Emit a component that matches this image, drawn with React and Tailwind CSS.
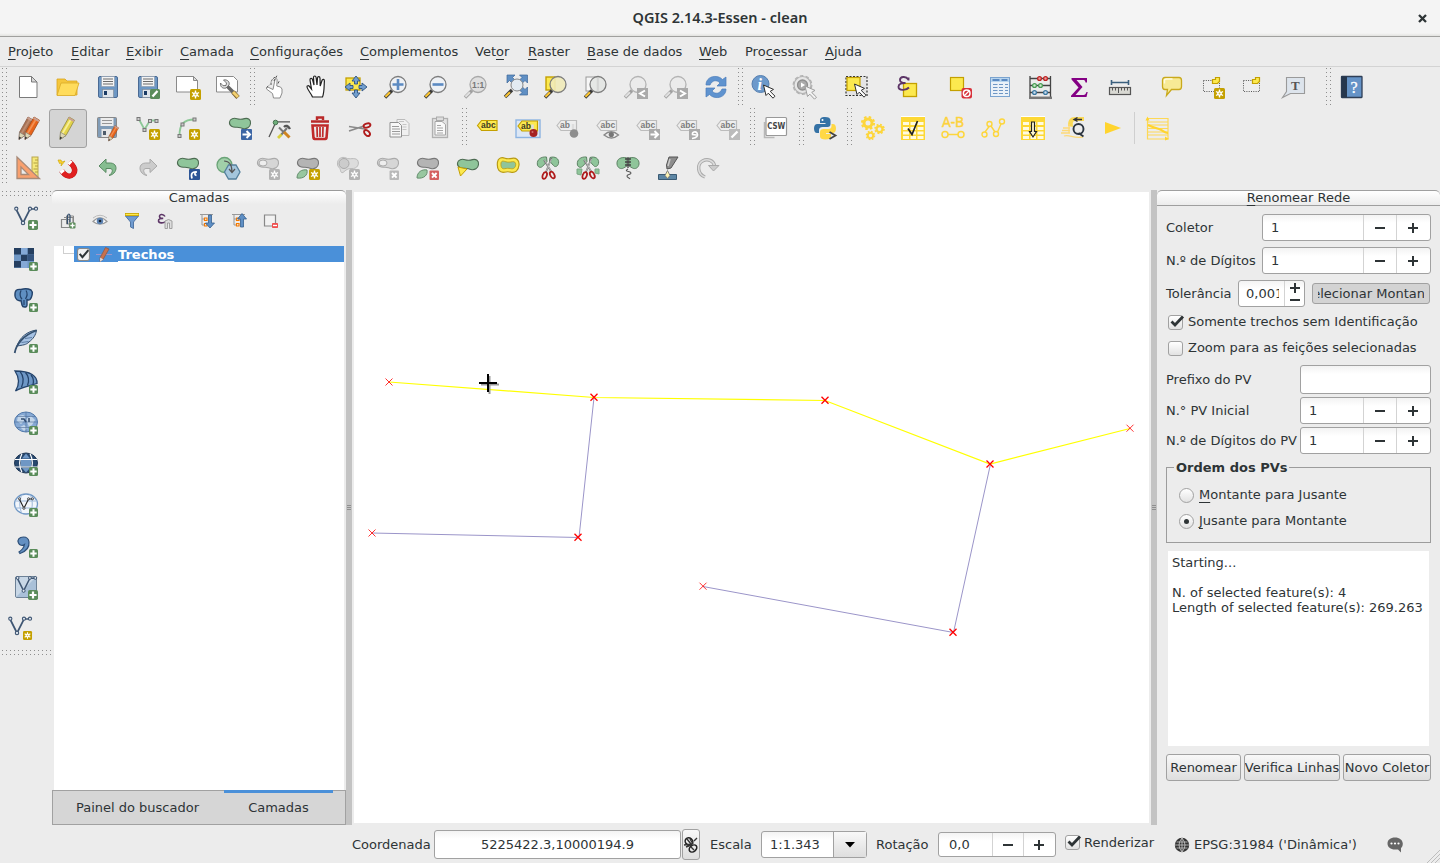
import React from "react";

/* ---------- shared drawing helpers ---------- */

function Ic({ children }) {
  return (
    <svg viewBox="0 0 24 24" width="24" height="24" className="block shrink-0 overflow-visible" fill="none">
      {children}
    </svg>
  );
}

function Star({ x = 13, y = 13, gray = false }) {
  return (
    <g transform={`translate(${x} ${y})`}>
      <rect x="0" y="0" width="11" height="11" rx="1.5" fill={gray ? "#b3b3b3" : "#c4a000"} />
      <path d="M5.5 1.5v8M2 3.5l7 4M9 3.5l-7 4" stroke="#fff" strokeWidth="1.4" />
      <circle cx="5.5" cy="5.5" r="2.3" fill="#fff" />
      <circle cx="5.5" cy="5.5" r="1" fill={gray ? "#b3b3b3" : "#d9bc30"} />
    </g>
  );
}

function Plus({ x = 15, y = 15, s = 9 }) {
  return (
    <g transform={`translate(${x} ${y}) scale(${s / 9})`}>
      <rect width="9" height="9" rx="1.5" fill="#5a8c5a" />
      <path d="M4.5 1.3v6.4M1.3 4.5h6.4" stroke="#fff" strokeWidth="2" />
    </g>
  );
}

function Cross({ gray = false }) {
  return (
    <g>
      <rect x="13.5" y="14.5" width="9.5" height="9.5" rx="1" fill={gray ? "#b9b9b9" : "#d45f5f"} />
      <path d="M16 17l4.6 4.6M20.6 17L16 21.600" stroke="#fff" strokeWidth="2" />
    </g>
  );
}

function Lens({ fill = "#eef2f6", stroke = "#7c7c7c", handle = "#fcc735", dim = false, children }) {
  return (
    <>
      <path d="M8 15.500L1 22.500" stroke={dim ? "#a0a0a0" : "#3a3a3a"} strokeWidth="3.400" />
      <path d="M6 17.200L1.400 21.800" stroke={dim ? "#e0e0e0" : handle} strokeWidth="2" />
      <circle cx="14" cy="9.500" r="8" fill={fill} fillOpacity="0.9" stroke={stroke} strokeWidth="1.300" />
      {children}
    </>
  );
}

function Blob({ fill = "#8fc59a", stroke = "#4d6b52" }) {
  return (
    <path
      d="M1.500 5C2 1.500 6 .8 9 1.700c3 .9 5 .6 7.500-.1C20 .7 23 2.600 22.500 6.500c-.4 4-4 5.800-7.500 5-3-.7-4-1.500-6.500-1.300C5 10.500 1 9 1.500 5z"
      fill={fill}
      stroke={stroke}
      strokeWidth="1.100"
    />
  );
}

function Floppy() {
  return (
    <>
      <rect x="2.500" y="1.500" width="19" height="21" rx="1.500" fill="#6d97c4" stroke="#4a6a94" />
      <rect x="5.500" y="1.500" width="13" height="10" fill="#f4f4f4" stroke="#8a98a8" strokeWidth=".6" />
      <path d="M7 4h10M7 6.500h10M7 9h10" stroke="#6b6b6b" strokeWidth="1" />
      <rect x="6.500" y="14.500" width="11" height="8" fill="#dfe4ea" stroke="#7d8894" strokeWidth=".6" />
      <rect x="8" y="16" width="3" height="4" fill="#1c3c66" />
    </>
  );
}

function Pencil({ body = "#e8641b", edge = "#9c4a1c", light = "#f29052" }) {
  return (
    <>
      <path d="M13 1l5.500 3.200L10 19.500l-6 4 .5-7.300z" fill={body} stroke={edge} strokeWidth=".8" />
      <path d="M14.500 4L6.500 17.500" stroke={light} strokeWidth="1.800" />
      <path d="M4.500 16.200l5.500 3.300-6 4z" fill="#ddd6b4" stroke="#777" strokeWidth=".6" />
      <path d="M4.200 20.500l2 1.300L3.800 23.500z" fill="#333" />
      <path d="M13 1l5.500 3.200-1 1.800L12 2.800z" fill="#c9a091" />
    </>
  );
}

function Label({ fill = "#fce94f", stroke = "#c4a000", color = "#40391f", text = "abc" }) {
  return (
    <>
      <path d="M2 9.500L6 4.500h15.500v10H6z" fill={fill} stroke={stroke} strokeWidth="1.200" />
      <text x={text === "ab" ? 5 : 5.500} y="12.400" fontFamily="Liberation Sans, sans-serif" fontWeight="bold" fontSize="8.500" fill={color}>
        {text}
      </text>
    </>
  );
}

function GrayLabel({ text }) {
  return <Label fill="#eeeeee" stroke="#bcbcbc" color="#7b7b7b" text={text} />;
}

function VLine({ x = 0, y = 0, color = "#3f5673", dot = "#dfe6ee" }) {
  return (
    <g transform={`translate(${x} ${y})`} stroke={color}>
      <path d="M2 3l7 14L16 3h6" strokeWidth="1.700" />
      <circle cx="2.300" cy="2.700" r="1.600" fill={dot} strokeWidth="1.100" />
      <circle cx="9" cy="17" r="1.700" fill={dot} strokeWidth="1.100" />
      <circle cx="16" cy="2.700" r="1.600" fill={dot} strokeWidth="1.100" />
      <circle cx="22" cy="2.700" r="1.600" fill={dot} strokeWidth="1.100" />
    </g>
  );
}

function Gear({ cx, cy, r, color }) {
  return (
    <g>
      <circle cx={cx} cy={cy} r={r} stroke={color} strokeWidth={r * 0.75} />
      <circle cx={cx} cy={cy} r={r * 1.5} stroke={color} strokeWidth={r * 0.55} strokeDasharray={`${r * 0.62} ${r * 0.558}`} />
    </g>
  );
}

function Pointer({ x = 0, y = 0, dim = false }) {
  return (
    <path
      transform={`translate(${x} ${y})`}
      d="M0 0l2.500 10.500 2.300-2.300 4.700 5 2-2-4.800-4.800 3.300-2z"
      fill={dim ? "#f2f2f2" : "#fff"}
      stroke={dim ? "#9d9d9d" : "#2e2e2e"}
      strokeWidth="1"
    />
  );
}

function Grid({ children }) {
  return (
    <>
      <rect x="0" y="0" width="24" height="1" fill="#fff" />
      <rect x="0" y="1" width="24" height="23" fill="#fdd835" />
      <path d="M2 7.500h6M9.500 7.500h5.500M16.500 7.500h6M2 12.500h6M9.500 12.500h5.500M16.500 12.500h6M2 17h6M9.500 17h5.500M16.500 17h6M2 21.500h6M9.500 21.500h5.500M16.500 21.500h6" stroke="#fffbe0" strokeWidth="2.800" />
      {children}
    </>
  );
}

function Scissors({ extra = false }) {
  return (
    <>
      <path d="M10.500 1C5 .5 1 3.500 1.300 8c.2 3 3 4.300 5 2.600L11 5.500zM14 1.500C19 0 23.500 2.500 22.500 7.500c-.7 3-3.500 4-5 2L13.500 5z" fill="#8fc59a" stroke="#5d8264" />
      {extra && <path d="M1 13h5l-1 6-4-1zM19 13h4v5l-4-1z" fill="#8fc59a" stroke="#7ba684" />}
      <path d="M8 4l7.500 12M15.500 2L10 16" stroke="#777" strokeWidth="1.700" />
      <path d="M8.500 4l7 12M15.500 3L10.300 15" stroke="#ddd" strokeWidth=".6" />
      <ellipse cx="8.700" cy="19.500" rx="2" ry="3.500" transform="rotate(22 8.700 19.500)" stroke="#b01c1c" strokeWidth="1.800" />
      <ellipse cx="16.300" cy="19" rx="2" ry="3.500" transform="rotate(-28 16.300 19)" stroke="#b01c1c" strokeWidth="1.800" />
    </>
  );
}

/* ---------- toolbar icon drawings ---------- */

const icons = {
  newFile: <Ic><path d="M3.500 1.500h12L21 7v15.500H3.500z" fill="#fff" stroke="#7a7a7a" /><path d="M15.500 1.500V7H21z" fill="#d8d8d8" stroke="#7a7a7a" /></Ic>,
  open: <Ic><path d="M1 4h8l2 2h10v14H1z" fill="#f5c63c" stroke="#d9a520" strokeWidth=".8" /><path d="M1 20.500L5 8h18l-4 12.500z" fill="#ffdc5c" stroke="#d9ab28" strokeWidth=".8" /></Ic>,
  save: <Ic><Floppy /></Ic>,
  saveAs: <Ic><Floppy /><rect x="14" y="14" width="10" height="10" rx="1.500" fill="#5a8c5a" /><path d="M16.500 21.500l5-5.500" stroke="#fff" strokeWidth="2.300" /></Ic>,
  newComposer: <Ic><path d="M.5 1.500h17L21.500 5.500v11.500H.5z" fill="#fff" stroke="#8a8a8a" /><path d="M17.500 1.500v4h4z" fill="#ddd" stroke="#8a8a8a" /><Star x={14} y={14} /></Ic>,
  composer: <Ic><path d="M.5 1.500h17L21.500 5.500v11.500H.5z" fill="#fff" stroke="#8a8a8a" /><path d="M11.500 11.500l6 6" stroke="#666" strokeWidth="3.500" /><path d="M7.500 5l3 3-.5 2.500-3 .2L4.500 8c-.5 3.500 2 6 5.500 5l3-3c1-3-1.500-5.800-5.500-5z" fill="#ddd" stroke="#666" strokeWidth=".9" /><path d="M17 17l5 5.500" stroke="#7a5c28" strokeWidth="4.500" /><path d="M17 17l5 5" stroke="#f2d070" strokeWidth="3" /></Ic>,
  touch: <Ic><g transform="translate(1.500 0)"><path d="M8 23l-1-4.500L1 14c-.3-1.600 1-2 2.200-1.500l4.300 2L9.500 4.500c.4-1.600 2.200-1.200 2.100.3L11.300 11l3.700 1 1.500 2v4L14.500 23z" fill="#fff" stroke="#8c8c8c" /><path d="M5.500 10c-.5-4 1.500-7 5.500-8.500M1 12.500l3-2.500M8.500 6l3-5.500M12.500 8.500l1.500-3" stroke="#555" strokeWidth="1" strokeDasharray="2.500 1" /></g></Ic>,
  hand: <Ic><path transform="translate(1.500 0)" d="M7 22c-1-3-5-7-5.500-10C1.300 10.500 3 10.300 4 11.500l2 2.500L4.500 5c-.2-2 2-2.300 2.500-.5L8.500 10 8 2.500c0-2 2.300-2 2.600 0L11.500 10l.5-7c.2-1.900 2.400-1.700 2.500.2L14.700 11l1.800-5.500c.6-1.800 2.600-1.300 2.400.6C18.500 10 19 17 17 22z" fill="#fff" stroke="#222" strokeWidth="1.200" /></Ic>,
  panSel: <Ic><rect x="2" y="3" width="14" height="12" fill="#fce94f" stroke="#c4a000" strokeWidth="1.300" /><path d="M12 1l4 5h-2.500v3h-3V6H8zM12 23l4-5h-2.500v-3h-3v3H8zM1 12l5-4v2.500h3v3H6V16zM23 12l-5-4v2.500h-3v3h3V16z" fill="#729fcf" stroke="#2f5480" strokeWidth=".9" /></Ic>,
  zoomIn: <Ic><Lens><path d="M14 4v11M8.500 9.500h11" stroke="#5b8ac2" strokeWidth="2.600" /></Lens></Ic>,
  zoomOut: <Ic><Lens><path d="M8.500 9.500h11" stroke="#5b8ac2" strokeWidth="2.600" /></Lens></Ic>,
  zoomNative: <Ic><Lens fill="#dedede" stroke="#a8a8a8" dim><text x="8" y="12.500" fontFamily="Liberation Sans, sans-serif" fontWeight="bold" fontSize="8.500" fill="#777">1:1</text></Lens></Ic>,
  zoomFull: <Ic><path d="M3 0h8L8.500 2.500l3 3-3 3-3-3L3 8zM23.500 0v8L21 5.500l-3 3-3-3 3-3L15.500 0zM23.500 20h-8l2.500-2.500-3-3 3-3 3 3 2.500-2.500z" fill="#5f8fc4" stroke="#3f6799" strokeWidth=".7" /><path d="M8 15L1 22" stroke="#3a3a3a" strokeWidth="3.400" /><path d="M6 17.200L1.400 21.800" stroke="#fcc735" strokeWidth="2" /><circle cx="13" cy="10" r="6" fill="#e3ebf2" stroke="#888" /></Ic>,
  zoomSel: <Ic><rect x="2" y="2" width="9" height="13" fill="#fce94f" stroke="#c4a000" strokeWidth="1.400" /><Lens fill="#f1ebb9" /></Ic>,
  zoomLayer: <Ic><rect x="2" y="2" width="11" height="14" fill="#f7f7f7" stroke="#999" /><Lens fill="#e3e5e3"><path d="M14 3v13" stroke="#c8c8c8" /></Lens></Ic>,
  zoomLast: <Ic><Lens fill="#ebebeb" stroke="#b3b3b3" dim /><rect x="13" y="13" width="11" height="11" fill="#aaa" /><path d="M21 15.500l-5 3 5 3" stroke="#fff" strokeWidth="2" /></Ic>,
  zoomNext: <Ic><Lens fill="#ebebeb" stroke="#b3b3b3" dim /><rect x="13" y="13" width="11" height="11" fill="#aaa" /><path d="M16 15.500l5 3-5 3" stroke="#fff" strokeWidth="2" /></Ic>,
  refresh: <Ic><path d="M2 10C2 4 7 1 12 1.500c3 .2 5 1.500 6.500 3L22 2v9h-9l3-3C13 4.500 8 5 6 10z" fill="#5f93cf" stroke="#4a7cba" strokeWidth=".7" /><path d="M22 14c0 6-5 9-10 8.500-3-.2-5-1.500-6.500-3L2 22v-9h9l-3 3c3 3.500 8 3 10-2z" fill="#5f93cf" stroke="#4a7cba" strokeWidth=".7" /></Ic>,
  identify: <Ic><circle cx="8.500" cy="9" r="8.500" fill="#6c99cb" stroke="#557fb0" /><text x="5.500" y="15" fontFamily="Liberation Serif, serif" fontStyle="italic" fontWeight="bold" fontSize="16" fill="#fff">i</text><Pointer x={11.500} y={10} /></Ic>,
  action: <Ic><circle cx="10.500" cy="10" r="8.500" fill="#e6e6e6" stroke="#b2b2b2" strokeWidth="1.200" /><circle cx="10.500" cy="10" r="9.300" stroke="#b2b2b2" strokeWidth="1.300" strokeDasharray="3.500 2.340" /><circle cx="10.500" cy="10" r="5" fill="#aaa" stroke="#8e8e8e" strokeWidth="1.300" /><path d="M9 7.500l4 2.500-4 2.500z" fill="#fff" /><Pointer x={13} y={11} dim /></Ic>,
  select: <Ic><rect x="1" y="1.500" width="21" height="19" fill="#e4e4e4" stroke="#333" strokeWidth="1.200" strokeDasharray="2 1.500" /><rect x="2" y="2.500" width="13" height="13" fill="#fce94f" stroke="#c4a000" strokeWidth="1.200" /><Pointer x={9.500} y={9} /></Ic>,
  expression: <Ic><rect x="8.500" y="8.500" width="13" height="13" fill="#fce94f" stroke="#c4a000" strokeWidth="1.300" /><path d="M13.500 5.500V2.500M13.300 4.500C11 .8 5 1.500 5 5c0 2.200 2.500 3.200 5.500 3C6.500 7.800 3.500 9 3.500 11.800c0 4 7.500 4 10.500.7" stroke="#5c3566" strokeWidth="1.900" /></Ic>,
  deselect: <Ic><rect x="2.500" y="2.500" width="13" height="13" fill="#fce94f" stroke="#c4a000" strokeWidth="1.200" /><rect x="13.500" y="13" width="10.500" height="10.500" rx="2" fill="#d8313a" /><circle cx="18.700" cy="18.200" r="3.300" stroke="#fff" strokeWidth="1.500" /><path d="M16 21l5.500-5.500" stroke="#fff" strokeWidth="1.300" /></Ic>,
  table: <Ic><rect x="2.500" y="2.500" width="19" height="19" fill="#eaf1f8" stroke="#7aa3cf" /><rect x="3" y="3" width="18" height="4" fill="#b8d5ee" /><path d="M4.500 5h7M13.500 5h6" stroke="#5b8ac2" strokeWidth="2" /><path d="M5 9.500h4.500M11 9.500h4M17 9.500h3M5 12.500h4.500M11 12.500h4M17 12.500h3M5 15.500h4.500M11 15.500h4M17 15.500h3M5 18.500h4.500M11 18.500h4M17 18.500h3" stroke="#6e96c4" /></Ic>,
  abacus: <Ic><path d="M2 1v22M22.500 1v22M2 3.500h20M2 10.500h20M2 17.500h20" stroke="#444" strokeWidth="1.300" /><path d="M1 22.800h23" stroke="#777" strokeWidth="2.500" /><g strokeWidth="1.300"><circle cx="11.500" cy="3.500" r="1.900" fill="#e99" stroke="#b22" /><circle cx="17.500" cy="3.500" r="1.900" fill="#e99" stroke="#b22" /><circle cx="6.500" cy="10.500" r="1.900" fill="#cec" stroke="#4a9a55" /><circle cx="12.500" cy="10.500" r="1.900" fill="#cec" stroke="#4a9a55" /><circle cx="6.500" cy="17.500" r="1.900" fill="#cde" stroke="#3c78a0" /><circle cx="17.500" cy="17.500" r="1.900" fill="#cde" stroke="#3c78a0" /></g></Ic>,
  sigma: <Ic><path d="M3.500 3h15.500v4.500h-1.500c-.3-2-1-2.500-2.500-2.500H8.500l6 7-7 8h8c1.500 0 2.300-1 3-3h1.200L18.500 22H3v-1.300L10.500 12.500 3.500 4.500z" fill="#840084" /></Ic>,
  ruler: <Ic><path d="M3.500 7.500h17M3.500 5v5M20.500 5v5" stroke="#3a5f7d" strokeWidth="1.600" /><rect x="1.500" y="12.500" width="21" height="7" fill="#d9d9d3" stroke="#555" strokeWidth="1.200" /><path d="M4.500 13v2.500M7.500 13v2.500M10.500 13v5M13.500 13v2.500M16.500 13v2.500M19.500 13v2.500" stroke="#555" /></Ic>,
  bubble: <Ic><path d="M5 2.500h14q2.500 0 2.500 3v6q0 3-2.500 3h-7.500L6.500 20.500l1-6H5q-2.500 0-2.500-3v-6q0-3 2.500-3z" fill="#f7ea95" stroke="#c9a91c" strokeWidth="1.300" /><path d="M4.500 8.500v-3q0-1.500 2-1.500h6" stroke="#fffbe0" strokeWidth="1.400" /></Ic>,
  newNote: <Ic><rect x="1.500" y="5.500" width="16" height="11" fill="#eee" stroke="#555" strokeDasharray="1 1.300" /><path d="M10.500 4.500h3v-2h4v4l-2 2h-5z" fill="#fce94f" stroke="#c4a000" strokeWidth="1.200" /><Star x={12} y={13} /></Ic>,
  note: <Ic><rect x="1.500" y="5.500" width="16" height="11" fill="#eee" stroke="#555" strokeDasharray="1 1.300" /><path d="M10.500 4.500h3v-2h4v4l-2 2h-5z" fill="#fce94f" stroke="#c4a000" strokeWidth="1.200" /></Ic>,
  textNote: <Ic><path d="M4.500 2.500h18v16H8.500L.5 22.500l4-6z" fill="#dde4ec" stroke="#9a9a9a" strokeWidth="1.100" /><text x="9" y="15" fontFamily="Liberation Serif, serif" fontWeight="bold" fontSize="13" fill="#555">T</text></Ic>,
  help: <Ic><rect x="1.500" y="1.500" width="20.500" height="21" rx=".5" fill="#6593c7" stroke="#2e3e56" strokeWidth="1.300" /><rect x="1.500" y="1.500" width="5.500" height="21" fill="#26374d" /><text x="10.500" y="17.500" fontFamily="Liberation Serif, serif" fontSize="16" fill="#fff" stroke="#fff" strokeWidth=".3">?</text></Ic>,

  pencils: <Ic><g transform="translate(-1 0)"><Pencil body="#a87355" edge="#8a5a44" light="#bd8b70" /></g><g transform="translate(5 0)"><Pencil /></g></Ic>,
  pencil: <Ic><Pencil body="#e2d34a" edge="#8d8545" light="#f7ef98" /></Ic>,
  saveEdits: <Ic><g opacity=".85"><rect x="1.500" y="1.500" width="19" height="20" rx="1" fill="#6f8fae" stroke="#777" /><rect x="4.500" y="2" width="13" height="8" fill="#ececec" /><path d="M6 4.500h10M6 7.500h10" stroke="#888" /><rect x="5.500" y="13" width="10" height="8" fill="#e6e6e6" /><rect x="7" y="15" width="3" height="4" fill="#345" /></g><g transform="translate(10 9) scale(.68)"><Pencil /></g></Ic>,
  addLine: <Ic><path d="M2.500 2.500l6 11 5.500-9h6.500" stroke="#8cc897" strokeWidth="1.800" /><g fill="#ccc" stroke="#777"><rect x="1" y="1.500" width="3" height="3" /><rect x="7" y="12.500" width="3" height="3" /><rect x="12.500" y="3.500" width="3" height="3" /><rect x="19" y="3.500" width="3" height="3" /></g><Star x={13} y={13} /></Ic>,
  addCurve: <Ic><path d="M3.500 19.500C3.500 8 8 3.500 18.500 3.500" stroke="#8cc897" strokeWidth="1.900" /><g fill="#ccc" stroke="#777"><rect x="2" y="18.500" width="3" height="3" /><rect x="5" y="7" width="3" height="3" /><rect x="17" y="2" width="3" height="3" /></g><Star x={13} y={13} /></Ic>,
  moveFeature: <Ic><g transform="translate(0 1)"><Blob /></g><rect x="13" y="13" width="11" height="11" rx="1" fill="#3c66a5" /><path d="M14.500 18.500h6M18.500 15l3.500 3.500-3.500 3.500" stroke="#fff" strokeWidth="2" /></Ic>,
  node: <Ic><path d="M7.500 7L1 21M9 5.800h13" stroke="#555" strokeWidth="1.300" /><circle cx="7.500" cy="6.500" r="2.300" fill="#6dae7a" stroke="#4a7352" /><path d="M11 11.500l6 6M19 12l-6 7" stroke="#777" strokeWidth="2" /><path d="M16 11q3-3 6 2" stroke="#555" strokeWidth="2.400" /><path d="M16 16l5.500 5.500" stroke="#cf8420" strokeWidth="3" /><path d="M13.500 18.500l-3.500 3.500" stroke="#d9cf3d" strokeWidth="2.800" /></Ic>,
  trash: <Ic><path d="M3 5.500h18M9 4V1.500h6V4" stroke="#b92929" strokeWidth="2.400" /><path d="M4.500 9.500h15l-1 12.500q-.2 1-1 1h-11q-.8 0-1-1z" fill="#ececec" stroke="#c02a2a" strokeWidth="2.600" /><path d="M9 11l.3 10M12 11v10M15 11l-.3 10" stroke="#c02a2a" strokeWidth="1.700" /></Ic>,
  cut: <Ic><path d="M1 10.500l16 2.500M1 15l15-5" stroke="#8a8a8a" strokeWidth="1.700" /><ellipse cx="19" cy="9.500" rx="3.500" ry="2" transform="rotate(-18 19 9.500)" stroke="#b01c1c" strokeWidth="1.900" /><ellipse cx="19" cy="17" rx="3.500" ry="2.200" transform="rotate(45 19 17)" stroke="#b01c1c" strokeWidth="1.900" /></Ic>,
  copy: <Ic><g transform="translate(-1.500 0)"><path d="M10.500 3.500h8l4 4v12h-12z" fill="#f0f0f0" stroke="#bbb" /><path d="M3.500 6.500h8.500l3 3v11.500H3.500z" fill="#f7f7f7" stroke="#8f8f8f" /><path d="M5.500 10.500h7M5.500 13h8M5.500 15.500h8M5.500 18h8" stroke="#9a9a9a" /><path d="M12.500 5.500h5M16 8.500h4M16 11h4M16 13.500h4" stroke="#c5c5c5" /></g></Ic>,
  paste: <Ic><rect x="4.500" y="2.500" width="15" height="19" fill="#e3e3e3" stroke="#b0b0b0" strokeWidth="1.300" /><path d="M7 5.500h7l3.500 3V19H7z" fill="#f9f9f9" stroke="#a5a5a5" /><rect x="8.500" y="1" width="7" height="3.500" fill="#ddd" stroke="#aaa" /><path d="M9 9.500h4M9 12h6M9 14.500h6M9 17h6" stroke="#a5a5a5" /></Ic>,
  label: <Ic><g transform="translate(-.5 0)"><Label /></g></Ic>,
  labelPin: <Ic><rect x="0" y="4" width="24" height="17.500" fill="#dce7f5" stroke="#8db4e2" strokeWidth="1.400" /><g transform="translate(0 .5)"><Label text="ab" /><path d="M16.500 8v8" stroke="#ddd" strokeWidth="2.500" /><circle cx="17.500" cy="16.500" r="4" fill="#a52222" /><circle cx="16.500" cy="15.500" r="1" fill="#d07070" /></g></Ic>,
  labelPinOff: <Ic><g transform="translate(-1 0)"><GrayLabel text="ab" /></g><path d="M17 8v8" stroke="#ddd" strokeWidth="2.500" /><circle cx="18" cy="17.500" r="4.300" fill="#8e8e8e" /></Ic>,
  labelShow: <Ic><g transform="translate(-1 0)"><GrayLabel /></g><path d="M8 19q7-6.500 14.500 0-7 6-14.500 0z" fill="#eee" stroke="#888" strokeWidth="1.300" /><circle cx="15.300" cy="18.500" r="2.600" fill="#777" /></Ic>,
  labelMove: <Ic><g transform="translate(-1 0)"><GrayLabel /></g><rect x="13" y="13" width="11" height="11" fill="#aaa" /><path d="M14.500 18.500h6M18.500 15l3.500 3.500-3.500 3.500" stroke="#fff" strokeWidth="2" /></Ic>,
  labelRotate: <Ic><g transform="translate(-1 0)"><GrayLabel /></g><rect x="13" y="13" width="11" height="11" fill="#aaa" /><path d="M16 22.500c5-.5 6.500-3 5-5.500-1.500-2-5-1-4.500 1.500l4 .5" stroke="#fff" strokeWidth="1.600" /></Ic>,
  labelEdit: <Ic><g transform="translate(-1 0)"><GrayLabel /></g><rect x="13" y="13" width="11" height="11" fill="#bbb" /><path d="M15.500 21.500l6-6" stroke="#fff" strokeWidth="2.300" /></Ic>,
  csw: <Ic><path d="M.5 6v15.500h10" stroke="#b8b8b8" strokeWidth="1.500" /><rect x="2" y="1.500" width="20.500" height="18" rx="1" fill="#fff" stroke="#999" strokeWidth="1.200" /><text x="3.200" y="13.300" textLength="18" lengthAdjust="spacingAndGlyphs" fontFamily="DejaVu Sans, sans-serif" fontWeight="bold" fontSize="8" fill="#444">CSW</text></Ic>,
  python: <Ic><path d="M12 1c-4 0-5 1.500-5 3.500V7h5.500v1H4.500C2 8 1 10 1 12.500s1 4.500 3 4.500h2v-3c0-2 1.500-3 3.500-3h5c2 0 3-1.200 3-3V4.500C17.500 2 15.500 1 12 1z" fill="#3572a5" /><circle cx="9.500" cy="4" r="1" fill="#fff" /><path d="M18.500 8h1.500c2 0 3 2 3 4.500S22 17 19.500 17H13v1h5v2.500c0 2-2 3-5.500 3S7 22.500 7 20.500V16c0-2 1.500-3 3.500-3h5c2 0 3-1 3-3z" fill="#ffd845" /><path d="M16.500 16l6 3.500-6 3.500" stroke="#444" strokeWidth="1.800" /></Ic>,
  gears: <Ic><Gear cx={7} cy={7} r={4} color="#fdd63c" /><Gear cx={18.500} cy={13} r={3} color="#fdd63c" /><Gear cx={9.500} cy={19.500} r={2.700} color="#fdd63c" /></Ic>,
  check: <Ic><Grid><path d="M7 12.500l4 6L16.500 5" stroke="#222" strokeWidth="1.700" /></Grid></Ic>,
  ab: <Ic><text x="1" y="11" textLength="22" lengthAdjust="spacingAndGlyphs" fontFamily="Liberation Sans, sans-serif" fontSize="14" fill="#fdd23c" stroke="#fdd23c" strokeWidth=".5">A-B</text><path d="M7 18.500h10" stroke="#fdd63c" strokeWidth="1.500" /><circle cx="4" cy="18.500" r="3" stroke="#fdd63c" strokeWidth="1.500" /><circle cx="20" cy="18.500" r="3" stroke="#fdd63c" strokeWidth="1.500" /></Ic>,
  poly: <Ic><path d="M4 16l4.500-6M10 10l4 6M16.500 16L20 8" stroke="#fdd63c" strokeWidth="1.400" /><g stroke="#fdd63c" strokeWidth="1.400"><circle cx="3.500" cy="18.500" r="2.500" /><circle cx="8.500" cy="8" r="2.500" /><circle cx="15" cy="18" r="2.500" /><circle cx="21" cy="5.500" r="2.500" /></g></Ic>,
  down: <Ic><Grid><path d="M10.500 6h3v9.500h2l-3.500 5.500-3.500-5.500h2z" fill="#fff8d0" stroke="#222" strokeWidth="1.200" /></Grid></Ic>,
  flow: <Ic><path d="M7 10C7 4 9 1 14 1h9v4h-9c-3 0-2 3-2 6z" fill="#fdd63c" opacity=".85" /><path d="M2 12h7M1 14.500h8M0 17h9M8 8v9M3 20c6-2 9 3 19 1" stroke="#fdd978" strokeWidth="1.300" /><path d="M21 3.500h-7m2.500-2L13 3.500l3.500 2" stroke="#333" strokeWidth="1.400" /><circle cx="17.500" cy="13" r="5" stroke="#2c3540" strokeWidth="1.900" /><path d="M17.500 17l5 3.500" stroke="#2c3540" strokeWidth="1.800" /></Ic>,
  play: <Ic><path d="M4 6l16 6-16 6z" fill="#ffd42e" /></Ic>,
  profile: <Ic><path d="M2.500 2.500h20.500v20.500H2.500zM3 6h20M3 9h20M3 12.500h20M3 16h20M3 19h20" stroke="#fdd855" strokeWidth="1.200" /><path d="M3 9c4 2 7 3 11 4 4 1 5 4 9 4" stroke="#ffd42e" strokeWidth="2.200" /><path d="M.5 4.500L2.500.5l2 4zM20 20.500l4 2.500-4 1.500z" fill="#ffd42e" /></Ic>,

  setsquare: <Ic><rect x="16" y="1" width="6" height="21" fill="#f5e87a" stroke="#b8a54c" /><path d="M19 4h3M17.500 7h4M19 10h3M17.500 13h4M19 16h3" stroke="#a8973f" strokeWidth=".9" /><path fillRule="evenodd" d="M1 1v21.500h22.500zM5 11l7.500 7.500H5z" fill="#f9a06e" stroke="#a88a78" strokeWidth="1.300" /></Ic>,
  magnet: <Ic><path d="M5.500 14.500c4 6 8.500 7 11.500 4 3.500-4 1-8.500-3.500-12.500" stroke="#b01414" strokeWidth="5.200" /><path d="M5.500 14.500c4 6 8.500 7 11.500 4 3.500-4 1-8.500-3.500-12.500" stroke="#e12020" strokeWidth="4.400" /><path d="M5.300 14.200l1.800 2.300M13.200 5.800l1.800 1.700" stroke="#fff" strokeWidth="4.600" /><path d="M2 4h3l1 2 3-1-4 5 .5-3-2 .500z" fill="#ffd42e" stroke="#c4a000" strokeWidth=".6" /></Ic>,
  undo: <Ic><path d="M10 3L3 10l7 6.500V12.500h4c3 0 3.500 4-1 7 8-1 10-12 1.500-12.500H10z" fill="#86bd90" stroke="#598a62" strokeWidth="1" /></Ic>,
  redo: <Ic><path d="M14 3l7 7-7 6.500V12.500h-4c-3 0-3.500 4 1 7-8-1-10-12-1.500-12.500H14z" fill="#ccc" stroke="#aaa" strokeWidth="1" /></Ic>,
  rotateFeature: <Ic><g transform="translate(0 1)"><Blob /></g><rect x="13" y="13" width="11" height="11" rx="1" fill="#2d5596" /><path d="M16 22.500c-1.500-5 0-7 5-6.500m-.5 0c-2.500 1-2 3 0 3.500" stroke="#fff" strokeWidth="1.700" /></Ic>,
  simplify: <Ic><circle cx="8.500" cy="9" r="7.500" fill="#a1d0a9" stroke="#6aa377" strokeWidth="1.300" /><path d="M12.500 9h7.500l4 7-4 7h-7.500l-4-7z" fill="#a4c6dc" stroke="#54809c" strokeWidth="1.300" /><path d="M8 5c5 0 8 4 8 11m-3-3l3 3.500 3-3.500" stroke="#555" strokeWidth="1.200" /></Ic>,
  addRing: <Ic><g transform="translate(0 1)"><Blob fill="#d6d6d6" stroke="#aaa" /></g><ellipse cx="7" cy="7" rx="4" ry="3" fill="#eee" stroke="#aaa" /><Star x={13} y={13} gray /></Ic>,
  addPart: <Ic><g transform="translate(0 1)"><Blob fill="#b4b4b4" stroke="#777" /></g><path d="M1 22c0-6 5-9 10-8 1 5-3 9-10 8z" fill="#98c7a0" stroke="#668e6e" /><Star x={13} y={13} /></Ic>,
  fillRing: <Ic><path d="M1.500 8C1 3 6 0 10 2c4 2 8-1 11.500 2C24 8 21 13 16 12.500c-4-.5-6 1.500-9 4-3 1-2-3-3.500-4.500C2 10.500 1.500 9.500 1.500 8z" fill="#dcdcdc" stroke="#bbb" /><circle cx="8" cy="7.500" r="5" fill="#ccc" stroke="#aaa" /><Star x={13} y={13} gray /></Ic>,
  delRing: <Ic><g transform="translate(0 1)"><Blob fill="#d6d6d6" stroke="#aaa" /></g><ellipse cx="7" cy="7" rx="4" ry="3" fill="#eee" stroke="#aaa" /><Cross gray /></Ic>,
  delPart: <Ic><g transform="translate(0 1)"><Blob fill="#b4b4b4" stroke="#777" /></g><path d="M1 22c0-6 5-9 10-8 1 5-3 9-10 8z" fill="#98c7a0" stroke="#668e6e" /><Cross /></Ic>,
  reshape: <Ic><g transform="translate(0 2)"><Blob /></g><path d="M2 11l9 2-6.500 7z" fill="#fce94f" stroke="#c4a000" /></Ic>,
  offset: <Ic><path d="M1.500 6C2 1.500 6 1 9 2.200c2.500 1 4.500.6 7 .1C20 1.500 23.500 4 23 9c-.5 6-4 8-8 7.200-2.500-.6-4.500-.6-6.500 0C4 17 .5 14 1.500 6z" fill="#fce94f" stroke="#b89a14" strokeWidth="1.200" /><path d="M5 7c.5-2.500 2.500-2 5-1.200 2 .6 4 .3 6.500-.1 2-.3 3.300.7 3.200 3-.2 3.300-2.500 4.500-5 3.900-2.500-.5-4-.3-6 .1C6 13.300 4.500 11 5 7z" fill="#8fc59a" stroke="#b89a14" strokeWidth=".8" /></Ic>,
  splitFeature: <Ic><Scissors /></Ic>,
  splitPart: <Ic><Scissors extra /></Ic>,
  merge: <Ic><path d="M11 2C5 .5.500 3 1 8c.4 4 4 5.500 6.500 4L11 10zM13 2c6-1.500 10.500 1 10 6-.4 4-4 5.500-6.500 4L13 10z" fill="#8fc59a" stroke="#5d8264" /><path d="M9 3h6M9 6h6M9 9h6M12 1v11" stroke="#444" strokeWidth="1.300" /><path d="M12 13c-5 3 3 2 3 4s-4 1-4 3 2 1.500 3 3" stroke="#555" strokeWidth="1.100" /></Ic>,
  rotateSymbol: <Ic><path d="M13 1h9L15 12l-4 1-.5-4z" fill="#8d8d8d" stroke="#555" /><path d="M14 3l-2 7" stroke="#ccc" strokeWidth="1.500" /><path d="M2.500 18.500h18v5h-18z" fill="#5d86a4" stroke="#3a5a73" /><path d="M11.500 14.500l2.500 5-2.500 3-2.500-3z" fill="#fdf3b5" stroke="#777" strokeWidth=".9" /></Ic>,
  rotateOff: <Ic><path d="M9 21C1 18 1 8 6.500 5 12 2 17.500 5 18.500 9.500" stroke="#a9a9a9" strokeWidth="3.400" /><path d="M9 21C1 18 1 8 6.500 5 12 2 17.500 5 18.500 9.500" stroke="#dcdcdc" strokeWidth="1.600" /><path d="M12.500 9.500h10.500l-5.500 5.500z" fill="#ccc" stroke="#a9a9a9" /></Ic>,

  vVector: <Ic><VLine /><Plus x={14} y={14} s={10} /></Ic>,
  vRaster: <Ic><rect x="0" y="1" width="20" height="20" fill="#6f97c5" /><path d="M0 1h7v6.500H0zM13.500 1H20v6.500h-6.500zM7 7.500h6.500V14H7zM0 14h7v6.500H0z" fill="#253f60" /><path d="M7 1h6.500v6.500H7zM7 14h6.500v7H7z" fill="#84a9d6" /><path d="M13.500 7.500H20V14h-6.500z" fill="#35557f" /><Plus /></Ic>,
  vPostgis: <Ic><path d="M1 8c-.5-6 2-7 6-6.500 3-1 7-1 10 .5 2.500 2 1 7-1 9.500-1.500 1-2.500.5-3-.5v6c0 3-4.500 2.500-5 0l-1-4.500C4 13.500 1.300 11 1 8z" fill="#5f8fc2" stroke="#24436b" strokeWidth="1.400" /><path d="M7 2.500C5.500 6 6 9 8 11M12 2.500c2 3 1 6-.5 8.500M10 12v5" stroke="#24436b" strokeWidth="1.200" /><Plus /></Ic>,
  vSpatialite: <Ic><path d="M22.500 1C13 2.500 6 8 3 17c6-1 9-1 12-4 4-3 7-7 7.500-12z" fill="#a6c2e4" stroke="#35506f" /><path d="M.7 24C2 15 10 6 22.500 1.500" stroke="#35506f" strokeWidth="1.800" /><path d="M7.500 13.500l7-1M11 9.500l7-1" stroke="#5f7fa6" /><Plus /></Ic>,
  vMssql: <Ic><path d="M1 1c4 6 5 13 .5 20C8 17 14 16.500 23 13.500 23.500 6 17 1 1 1z" fill="#6e97c6" stroke="#24436b" strokeWidth="1.300" /><path d="M6 1.300c4 5 4 10 1.500 16M11.500 2.500c3.500 4 4 8 2 13M17 5c2.500 3 3 6 2 9.500" stroke="#24436b" strokeWidth="1.300" /><Plus /></Ic>,
  vWms: <Ic><ellipse cx="12" cy="11" rx="11.500" ry="10" fill="#86a9d4" stroke="#5179aa" /><path d="M4 5l5-1 3 2-2 4-3 3-4-3zM12 8l5-3 4 4-3 5-3 2zM6 16l4-2 4 3-4 3z" fill="#c3d6ea" /><path d="M1 11h22M12 1v20M3 5.500h18M3 16.500h18" stroke="#4c6c96" strokeWidth=".6" /><path d="M7 8h3l2 3M15 7v4" stroke="#334d70" strokeWidth="1.500" /><Plus /></Ic>,
  vWcs: <Ic><ellipse cx="12" cy="11" rx="11.500" ry="10" fill="#28486e" stroke="#1f3755" /><path d="M12 1.500l4 5H8zM7 8h10v6.500H7zM8 16h8l-4 4.500z" fill="#6f97c5" /><path d="M1 7.500h22M1 15h22M8 1.500c-3 6-3 13 0 19M16 1.500c3 6 3 13 0 19" stroke="#fff" strokeWidth="1.200" /><Plus /></Ic>,
  vWfs: <Ic><ellipse cx="12" cy="11" rx="11.500" ry="10" fill="#f2f6fb" stroke="#6f97c5" strokeWidth="1.300" /><path d="M1 8h22M1 15h22M8 1.500c-3 6-3 13 0 19M16 1.500c3 6 3 13 0 19" stroke="#9db8d9" /><g transform="translate(4 4) scale(.66)"><VLine color="#222" /></g><Plus /></Ic>,
  vText: <Ic><path d="M9.500 3C5 3 3 6 4.500 9c1 2.500 4 3 6 1.500-.5 3-2 5-5.500 7.500l1 1.500C13 17 15.500 12.500 15 8c-.4-3-2.500-5-5.500-5z" fill="#6490c2" stroke="#2e5079" strokeWidth="1.200" /><Plus /></Ic>,
  vVirtual: <Ic><rect x="1.500" y="1.500" width="21" height="21" rx="1.500" fill="#a9c0d8" stroke="#6d8196" /><path d="M2 2h20L2 22z" fill="#c8d7e6" /><g transform="translate(1.500 .5) scale(.9)"><VLine /></g><Plus x={14} y={15} s={10} /></Ic>,
  vNew: <Ic><VLine /><g transform="translate(15 15) scale(.82)"><Star x={0} y={0} /></g></Ic>,
};

/* ---------- toolbar pieces ---------- */

function Handle() {
  return (
    <div className="h-full w-2 shrink-0 pt-[1px] pb-[2px] pl-[2px]">
      <div className="h-full w-[5px] bg-[linear-gradient(transparent_25%,#ececec_0),linear-gradient(90deg,#8e8e8e_25%,#ececec_0)] bg-[length:4px_4px]" />
    </div>
  );
}

function HandleH() {
  return (
    <div className="h-[6px] w-full pt-px pl-[2px]">
      <div className="h-[5px] w-[50px] bg-[linear-gradient(transparent_25%,#ececec_0),linear-gradient(90deg,#8e8e8e_25%,#ececec_0)] bg-[length:4px_4px]" />
    </div>
  );
}

function Tools({ names }) {
  return names.map((n) => (
    <div key={n} className="flex w-10 shrink-0 justify-center">
      {n === "pencil" ? (
        <div className="flex h-[39px] w-[38px] items-center justify-center rounded-[3px] border border-[#a1a1a1] bg-[#d4d4d4]">{icons[n]}</div>
      ) : (
        icons[n]
      )}
    </div>
  ));
}

function Toolbars() {
  return (
    <div className="h-[123px] shrink-0">
      <div className="flex h-10 items-center">
        <Handle />
        <Tools names={["newFile", "open", "save", "saveAs", "newComposer", "composer"]} />
        <Handle />
        <Tools names={["touch", "hand", "panSel", "zoomIn", "zoomOut", "zoomNative", "zoomFull", "zoomSel", "zoomLayer", "zoomLast", "zoomNext", "refresh"]} />
        <Handle />
        <Tools names={["identify", "action"]} />
        <div className="w-[13px]" />
        <Tools names={["select"]} />
        <div className="w-[10px]" />
        <Tools names={["expression"]} />
        <div className="w-[13px]" />
        <Tools names={["deselect", "table", "abacus", "sigma", "ruler"]} />
        <div className="w-3" />
        <Tools names={["bubble"]} />
        <div className="w-[2px]" />
        <Tools names={["newNote", "note", "textNote"]} />
        <div className="w-[10px]" />
        <Handle />
        <Tools names={["help"]} />
      </div>
      <div className="flex h-[42px] items-center">
        <Handle />
        <Tools names={["pencils", "pencil", "saveEdits", "addLine", "addCurve"]} />
        <div className="w-3" />
        <Tools names={["moveFeature", "node", "trash", "cut", "copy", "paste"]} />
        <Handle />
        <Tools names={["label", "labelPin", "labelPinOff", "labelShow", "labelMove", "labelRotate", "labelEdit"]} />
        <Handle />
        <Tools names={["csw"]} />
        <div className="w-px" />
        <Handle />
        <Tools names={["python"]} />
        <Handle />
        <Tools names={["gears", "check", "ab", "poly", "down", "flow", "play"]} />
        <div className="mr-[2px] ml-px h-8 w-px bg-[#cfcfcf]" />
        <Tools names={["profile"]} />
      </div>
      <div className="flex h-[38px] items-center">
        <Handle />
        <Tools names={["setsquare", "magnet", "undo", "redo", "rotateFeature", "simplify", "addRing", "addPart", "fillRing", "delRing", "delPart", "reshape", "offset", "splitFeature", "splitPart", "merge", "rotateSymbol", "rotateOff"]} />
      </div>
    </div>
  );
}

const menus = [
  ["", "P", "rojeto", "w-[63px]"],
  ["", "E", "ditar", "w-[55px]"],
  ["", "E", "xibir", "w-[54px]"],
  ["", "C", "amada", "w-[70px]"],
  ["", "C", "onfigurações", "w-[110px]"],
  ["", "C", "omplementos", "w-[115px]"],
  ["Vet", "o", "r", "w-[53px]"],
  ["", "R", "aster", "w-[59px]"],
  ["", "B", "ase de dados", "w-[112px]"],
  ["", "W", "eb", "w-[46px]"],
  ["Pro", "c", "essar", "w-[80px]"],
  ["", "A", "juda", "w-[60px]"],
];

function U({ children }) {
  return <span className="underline decoration-1 underline-offset-[3px]">{children}</span>;
}

/* ---------- form controls ---------- */

function Spin({ value, className, btn = "w-[33px]" }) {
  return (
    <div className={`flex shrink-0 items-stretch rounded-[3px] border border-[#a1a1a1] bg-[linear-gradient(#f3f3f3,#fff_8px)] pr-px ${className}`}>
      <div className="flex flex-1 items-center pl-[8px]">{value}</div>
      <div className={`flex items-center justify-center border-l border-[#d3d3d3] ${btn}`}>
        <svg width="11" height="11" viewBox="0 0 11 11"><path d="M0 6h10" stroke="#2e3436" strokeWidth="2" /></svg>
      </div>
      <div className={`flex items-center justify-center border-l border-[#d3d3d3] ${btn}`}>
        <svg width="11" height="11" viewBox="0 0 11 11"><path d="M0 6h10M5 1v10" stroke="#2e3436" strokeWidth="2" /></svg>
      </div>
    </div>
  );
}

function Check({ checked }) {
  return (
    <div className="h-[15px] w-[15px] shrink-0 rounded-[3px] border border-[#a1a1a1] bg-[linear-gradient(#fff,#e2e2e2)]">
      {checked && (
        <svg width="16" height="13" viewBox="0 0 16 13" className="block overflow-visible"><path d="M2.500 5.500l3.500 3.500 8-8.500" stroke="#2e3436" strokeWidth="2.800" fill="none" /></svg>
      )}
    </div>
  );
}

function Radio({ checked }) {
  return (
    <div className="flex h-[15px] w-[15px] shrink-0 items-center justify-center rounded-full border border-[#a1a1a1] bg-[linear-gradient(#fff,#e2e2e2)]">
      {checked && <div className="h-[5px] w-[5px] rounded-full bg-[#2e3436]" />}
    </div>
  );
}

function Splitter() {
  return (
    <div className="flex w-[6px] shrink-0 flex-col items-center justify-center gap-px bg-[#c3c3c3]">
      <div className="h-px w-1 bg-[#8f8f8f]" />
      <div className="h-px w-1 bg-[#8f8f8f]" />
      <div className="h-px w-1 bg-[#8f8f8f]" />
    </div>
  );
}

/* ---------- layers panel ---------- */

function LayerPanel() {
  const p = { width: 16, height: 16, viewBox: "0 0 16 16", fill: "none" };
  return (
    <div className="flex w-[294px] shrink-0 flex-col">
      <div className="flex h-[14px] shrink-0 items-center justify-center rounded-t-[5px] border-t border-[#9a9a9a] bg-[linear-gradient(#fff,#ececec)]">Camadas</div>
      <div className="flex h-[42px] shrink-0 items-center pb-[9px] pl-[9px]">
        <svg {...p} className="block shrink-0 overflow-visible"><path d="M.5 6.500h8v8h-8zM3 4.500h9v8" stroke="#888" strokeWidth="1.200" /><path d="M5.500 3h7v8h-7z" stroke="#888" /><path d="M6.500 11V2.500q1.500-3 2.500 0V9" stroke="#35506f" strokeWidth="1.200" /><Plus x={8.5} y={9.5} s={6} /></svg>
        <svg {...p} className="ml-[15px] block shrink-0 overflow-visible"><path d="M1 8.500Q8 1 15 8.500 8 14 1 8.500z" fill="#fff" stroke="#999" strokeWidth="1.200" /><path d="M1 5Q8-.5 15 5" stroke="#bbb" /><circle cx="8" cy="8" r="3.300" fill="#5e84b3" /><circle cx="8" cy="8" r="1.300" fill="#1a2533" /></svg>
        <svg {...p} className="ml-4 block shrink-0 overflow-visible"><path d="M1.500 3h13L9.500 9v6.500l-3-1.500V9z" fill="#6f9bd0" stroke="#5277a5" /><path d="M1 1.500h14" stroke="#c4a000" strokeWidth="3" /><path d="M1.500 1.500h13" stroke="#fce94f" strokeWidth="1.400" /></svg>
        <svg {...p} className="ml-[17px] block shrink-0 overflow-visible"><path d="M8 3.500C6.500.500 2.300 1 2.500 3.500c.2 1.600 2 2 3.700 1.900C3.500 5.300 1.300 6 1.500 7.800c.3 2.800 5 2.500 6.500.9" stroke="#5c3566" strokeWidth="1.600" /><path d="M8 15.500V8q3.500-3 7 0v7.500h-2.500V10h-2v5.500z" fill="#ddd" stroke="#999" strokeWidth=".9" /></svg>
        <svg {...p} className="ml-[27px] block shrink-0 overflow-visible"><path d="M0 1.500h13M2 2v10h3M2 6h3" stroke="#999" /><path d="M4.500 5h2.500v2.500H4.500zM4.500 10.500H7V13H4.500z" stroke="#f57900" strokeWidth="1.200" /><path d="M8.500 2h3v8h3L10 15 5.500 10h3z" fill="#5f8fc4" stroke="#35608f" strokeWidth=".8" /></svg>
        <svg {...p} className="ml-4 block shrink-0 overflow-visible"><path d="M0 1.500h13M2 2v10h3M2 6h3" stroke="#999" /><path d="M4.500 5h2.500v2.500H4.500zM4.500 10.500H7V13H4.500z" stroke="#f57900" strokeWidth="1.200" /><path d="M8.500 14h3V6h3L10 0.500 5.500 6h3z" fill="#5f8fc4" stroke="#35608f" strokeWidth=".8" /></svg>
        <svg {...p} className="ml-[15px] block shrink-0 overflow-visible"><path d="M1.500 2h11v11h-11z" fill="#f2f2f2" stroke="#888" strokeWidth="1.200" /><rect x="9" y="10" width="6" height="5" rx=".8" fill="#ef4f4f" /><path d="M10 12.500h4" stroke="#fff" strokeWidth="1.300" /></svg>
      </div>
      <div className="mr-[2px] ml-[2px] flex-1 bg-white">
        <div className="flex h-4 items-stretch">
          <div className="w-5 pl-[9px]"><div className="h-2 w-[11px] border-b border-l border-[#cfcfcf]" /></div>
          <div className="flex flex-1 items-center bg-[#4a90d9] pl-[3px]">
            <svg width="13" height="13" viewBox="0 0 12 12"><rect x=".5" y=".5" width="11" height="11" rx="2" fill="#f1f1f1" stroke="#8a8a8a" /><path d="M2.500 5.500l2.500 3 5.500-6.500" stroke="#2e3436" strokeWidth="1.900" fill="none" /></svg>
            <svg width="16" height="16" viewBox="0 0 16 16" className="ml-[6px]" fill="none"><path d="M0 8.500h16" stroke="#9b95cc" /><path d="M9.500 1.500L13 3 7 13.500l-3 2 .2-4z" fill="#c8714d" stroke="#8c5a4a" strokeWidth=".8" /><path d="M4.200 11.500l3 2-3.200 2.200z" fill="#ddd" /></svg>
            <span className="ml-[6px] pt-[2px] text-[13px] leading-[14px] font-bold text-white underline decoration-1 underline-offset-2">Trechos</span>
          </div>
        </div>
      </div>
      <div className="flex h-[35px] shrink-0 border border-t-0 border-[#a1a1a1] bg-[#d6d6d6]">
        <div className="flex w-[171px] items-center justify-center border-t border-[#a1a1a1] pr-[2px]">Painel do buscador</div>
        <div className="flex w-[109px] items-center justify-center border-t-[3px] border-[#4a90d9] pb-[2px]">Camadas</div>
        <div className="flex-1 border-t border-[#a1a1a1]" />
      </div>
    </div>
  );
}

/* ---------- map canvas ---------- */

function X({ x, y, strong = false }) {
  return <path d={`M${x - 3.500} ${y - 3.500}l7 7m0-7l-7 7`} stroke="#ff0000" strokeWidth={strong ? 1.3 : 1} strokeOpacity={strong ? 1 : 0.8} />;
}

function MapCanvas() {
  return (
    <div className="w-[799px] shrink-0 pt-[2px] pr-[2px] pl-[2px]">
      <svg width="795" height="631" viewBox="354 192 795 631" fill="none" className="block bg-white">
        <g stroke="#9b95c9" strokeWidth="1">
          <path d="M594 397.500L579 537.500 372 533" />
          <path d="M990.500 464L953.500 632.500 703 586.500" />
        </g>
        <path d="M389 382l205 15.500 231 3 165 63.500 140-35.500" stroke="#ffff00" strokeWidth="1.250" />
        <X x={389} y={382} />
        <X x={594} y={397.200} strong />
        <X x={825} y={400.200} strong />
        <X x={990} y={464} strong />
        <X x={1130} y={428.200} />
        <X x={372} y={533} />
        <X x={578} y={537.200} strong />
        <X x={703} y={586.200} />
        <X x={953} y={632.200} strong />
        <path d="M489.500 376v18M481 384.500h18" stroke="#999" strokeWidth="2" />
        <path d="M488 374v18M479 383h18" stroke="#000" strokeWidth="2" />
      </svg>
    </div>
  );
}

/* ---------- rename panel ---------- */

function Button({ children, className }) {
  return (
    <div className={`flex h-[27px] shrink-0 items-center justify-center overflow-hidden rounded-[3px] border border-[#a1a1a1] bg-[linear-gradient(#f8f8f8,#dedede)] whitespace-nowrap ${className}`}>
      {children}
    </div>
  );
}

function RenamePanel() {
  return (
    <div className="flex flex-1 flex-col">
      <div className="flex h-4 shrink-0 items-center justify-center rounded-t-[5px] border-t border-b border-[#9f9f9f] bg-[linear-gradient(#fff,#ececec)]">
        <span><U>R</U>enomear Rede</span>
      </div>
      <div className="flex flex-col pr-[9px] pl-[9px]">
        <div className="mt-2 flex items-center justify-between"><span>Coletor</span><Spin value="1" className="h-[27px] w-[169px]" /></div>
        <div className="mt-[6px] flex items-center justify-between"><span>N.º de Dígitos</span><Spin value="1" className="h-[27px] w-[169px]" /></div>
        <div className="mt-[6px] flex items-center">
          <span className="w-[72px]">Tolerância</span>
          <div className="flex h-[27px] w-[67px] rounded-[3px] border border-[#a1a1a1] bg-[linear-gradient(#f3f3f3,#fff_8px)]">
            <div className="ml-[7px] flex w-[33px] items-center overflow-hidden">0,001</div>
            <div className="ml-[5px] flex flex-1 flex-col items-center justify-center gap-[1px] border-l border-[#d3d3d3]">
              <svg width="10" height="10" viewBox="0 0 10 10"><path d="M0 5h10M5 0v10" stroke="#2e3436" strokeWidth="2" /></svg>
              <svg width="10" height="10" viewBox="0 0 10 10"><path d="M0 6h10" stroke="#2e3436" strokeWidth="2" /></svg>
            </div>
          </div>
          <div className="ml-[7px] flex h-[21px] w-[118px] items-center rounded-[3px] border border-[#a1a1a1] bg-[#d3d3d3] px-[5px]">
            <div className="flex w-full justify-center overflow-hidden whitespace-nowrap">Selecionar Montante</div>
          </div>
        </div>
        <div className="mt-[7px] ml-[2px] flex h-4 items-center gap-[5px]"><Check checked />Somente trechos sem Identificação</div>
        <div className="mt-[10px] ml-[2px] flex h-4 items-center gap-[5px]"><Check />Zoom para as feições selecionadas</div>
        <div className="mt-[9px] flex items-center justify-between"><span>Prefixo do PV</span><div className="h-[29px] w-[131px] rounded-[3px] border border-[#a1a1a1] bg-[linear-gradient(#f3f3f3,#fff_8px)]" /></div>
        <div className="mt-[3px] flex items-center justify-between"><span>N.° PV Inicial</span><Spin value="1" className="h-[27px] w-[131px]" /></div>
        <div className="mt-[3px] flex items-center justify-between"><span className="whitespace-nowrap">N.º de Dígitos do PV</span><Spin value="1" className="h-[27px] w-[131px]" /></div>
        <fieldset className="mt-[5px] h-[84px] border border-[#9c9c9c]">
          <legend className="ml-[7px] h-[16px] px-[2px] pt-px leading-4 font-bold">Ordem dos PVs</legend>
          <div className="mt-[12px] ml-[12px] flex h-4 items-center gap-[5px]"><Radio /><span><U>M</U>ontante para Jusante</span></div>
          <div className="mt-[10px] ml-[12px] flex h-4 items-center gap-[5px]"><Radio checked /><span><U>J</U>usante para Montante</span></div>
        </fieldset>
        <div className="mt-2 mr-[2px] ml-[2px] h-[195px] bg-white pt-1 pl-1 leading-[15px] whitespace-pre">{"Starting...\n\nN. of selected feature(s): 4\nLength of selected feature(s): 269.263"}</div>
        <div className="mt-2 flex gap-[3px]">
          <Button className="w-[75px]">Renomear</Button>
          <Button className="w-[96px]">Verifica Linhas</Button>
          <Button className="w-[88px]">Novo Coletor</Button>
        </div>
      </div>
    </div>
  );
}

/* ---------- status bar ---------- */

function StatusBar() {
  return (
    <div className="flex h-[38px] shrink-0 items-center pt-px pl-[352px]">
      <span className="w-[82px]">Coordenada</span>
      <div className="flex h-[29px] w-[247px] items-center justify-center rounded-[3px] border border-[#a1a1a1] bg-[linear-gradient(#f3f3f3,#fff_8px)]">5225422.3,10000194.9</div>
      <div className="ml-px flex h-[31px] w-[18px] items-center justify-center rounded-[3px] border border-[#a1a1a1] bg-[linear-gradient(#f8f8f8,#dedede)]">
        <svg width="16" height="18" viewBox="0 0 16 18" fill="none"><ellipse cx="6" cy="5.500" rx="4" ry="3.500" transform="rotate(40 6 5.500)" stroke="#222" strokeWidth="1.600" /><ellipse cx="10" cy="12.500" rx="4.200" ry="3" transform="rotate(-40 10 12.500)" stroke="#222" strokeWidth="1.600" /><path d="M4 3l4 5M7 3l3 5M1 9l8-1M8 11l3 3M11 5l3-3M3 11l5-2" stroke="#333" strokeWidth="1.400" /></svg>
      </div>
      <span className="ml-[10px] w-[51px]">Escala</span>
      <div className="flex h-[27px] w-[106px] rounded-[3px] border border-[#a1a1a1] bg-[linear-gradient(#f3f3f3,#fff_8px)]">
        <div className="flex flex-1 items-center pl-[8px]">1:1.343</div>
        <div className="flex w-[33px] items-center justify-center border-l border-[#a1a1a1] bg-[linear-gradient(#f8f8f8,#dedede)]">
          <svg width="10" height="6" viewBox="0 0 10 6"><path d="M0 0h10L5 5.500z" fill="#000" /></svg>
        </div>
      </div>
      <span className="ml-[9px] w-[62px]">Rotação</span>
      <Spin value="0,0" className="h-[25px] w-[118px] pl-[2px]" btn="w-[31px]" />
      <div className="ml-[9px] flex items-center gap-[4px] pb-[4px]"><Check checked />Renderizar</div>
      <svg width="16" height="16" viewBox="0 0 16 16" fill="none" className="ml-[20px]"><circle cx="8" cy="8" r="7.200" fill="#333" /><path d="M2.500 5h11M2.500 11h11M1 8h14M8 1v14M8 1q-6 7 0 14M8 1q6 7 0 14" stroke="#ccc" strokeWidth=".8" /></svg>
      <span className="ml-[4px]">EPSG:31984 ('Dinâmica')</span>
      <svg width="16" height="16" viewBox="0 0 16 16" className="ml-[30px]"><path d="M8 .5C3.500.500.500 3 .5 6.500s3 6 7.500 6l3 0 3 3v-4.500c1.200-1 1.800-2.500 1.800-4.500C15.500 3 12.500.500 8 .5z" fill="#666" /><circle cx="4.500" cy="6.500" r="1.100" fill="#fff" /><circle cx="8" cy="6.500" r="1.100" fill="#fff" /><circle cx="11.500" cy="6.500" r="1.100" fill="#fff" /></svg>
      <svg width="13" height="13" viewBox="0 0 13 13" className="mt-auto ml-auto" stroke="#bdbdbd"><path d="M0 13L13 0M4 13l9-9M8 13l5-5" /></svg>
    </div>
  );
}

export default function App() {
  return (
    <div className="flex h-[863px] w-[1440px] flex-col overflow-hidden bg-[#ececec] font-['DejaVu_Sans',sans-serif] text-[13px] leading-4 text-[#2e3436]">
      <div className="flex h-[37px] shrink-0 items-center border-b border-[#a0a09e] bg-[linear-gradient(#f4f4f4_92%,#e2e2df)]">
        <div className="w-10" />
        <div className="flex-1 pb-[2px] text-center font-['Noto_Sans',sans-serif] text-[14.500px] font-semibold">QGIS 2.14.3-Essen - clean</div>
        <div className="w-10 pl-[18px]">
          <svg width="9" height="9" viewBox="0 0 9 9"><path d="M1 1l7 7M8 1L1 8" stroke="#2e3436" strokeWidth="2.300" /></svg>
        </div>
      </div>
      <div className="flex h-[30px] shrink-0 items-center border-b border-[#d3d3d3] pl-2">
        {menus.map(([a, b, c, w], i) => (
          <div key={i} className={`shrink-0 whitespace-nowrap ${w}`}>{a}<U>{b}</U>{c}</div>
        ))}
      </div>
      <Toolbars />
      <div className="flex h-[635px] shrink-0">
        <div className="w-[52px] shrink-0">
          <HandleH />
          <div className="flex flex-col gap-[17px] pt-[10px] pl-[14px]">
            {icons.vVector}{icons.vRaster}{icons.vPostgis}{icons.vSpatialite}{icons.vMssql}{icons.vWms}{icons.vWcs}{icons.vWfs}{icons.vText}{icons.vVirtual}
            <div className="-ml-[6px]">{icons.vNew}</div>
          </div>
          <div className="mt-[9px]"><HandleH /></div>
        </div>
        <LayerPanel />
        <Splitter />
        <MapCanvas />
        <Splitter />
        <RenamePanel />
      </div>
      <StatusBar />
    </div>
  );
}
